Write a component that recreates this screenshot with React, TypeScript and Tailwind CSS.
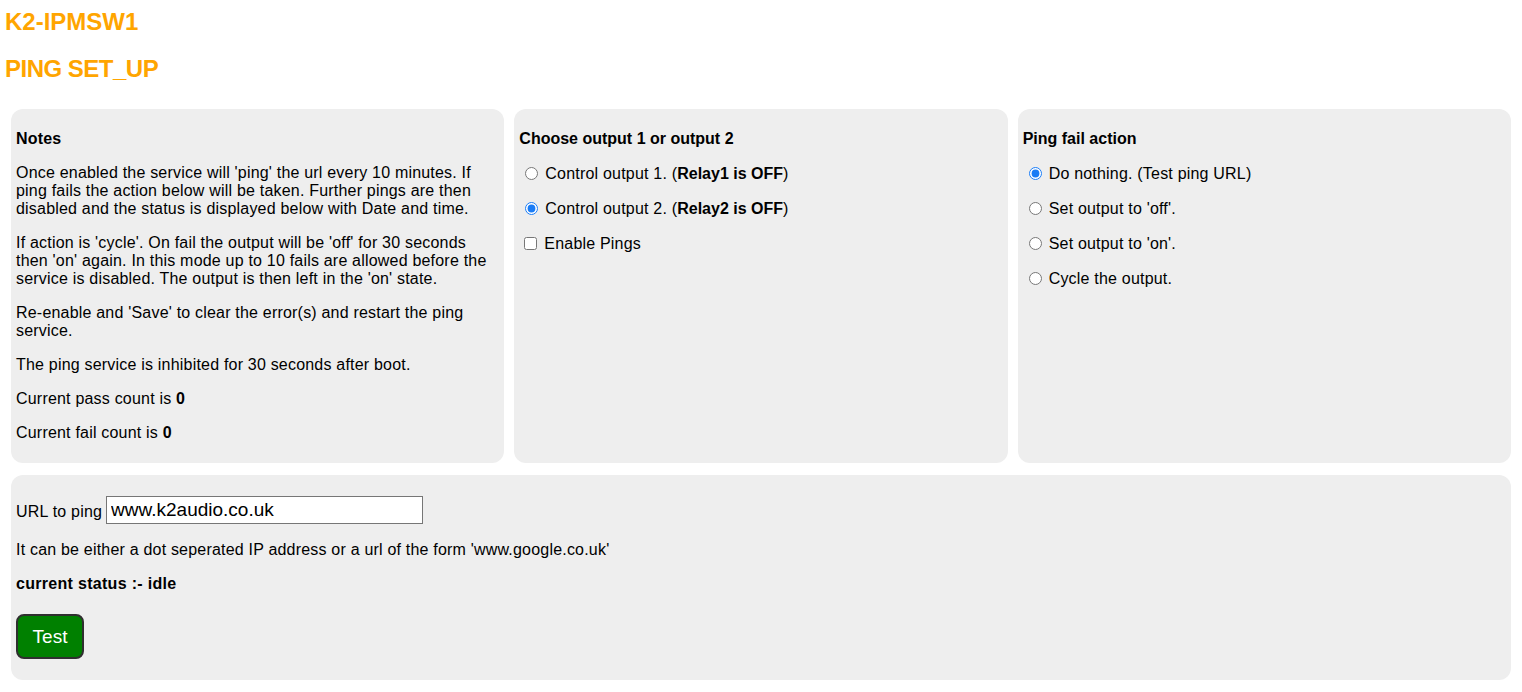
export default function App() {
  return (
    <div className="min-h-screen bg-white text-black text-base leading-[18px] tracking-[0.2px] font-['Liberation_Sans',Arial,sans-serif] pb-3">
      <h2 className="pt-2 ml-[5px] text-[24px] leading-[28px] font-bold tracking-normal text-[#ffa500]">K2-IPMSW1</h2>
      <h2 className="mt-[19px] ml-[5px] text-[24px] leading-[28px] font-bold tracking-[-0.5px] text-[#ffa500]">PING SET_UP</h2>

      <div className="mt-[26px] mx-[11px] grid grid-cols-3 gap-[10px]">
        <div className="bg-[#eeeeee] rounded-xl p-[5px]">
          <p className="my-4 font-bold">Notes</p>
          <p className="my-4">
            Once enabled the service will 'ping' the url every 10 minutes. If ping fails the action below will be taken. Further pings are then disabled and the status is displayed below with Date and time.
          </p>
          <p className="my-4">
            If action is 'cycle'. On fail the output will be 'off' for 30 seconds then 'on' again. In this mode up to 10 fails are allowed before the service is disabled. The output is then left in the 'on' state.
          </p>
          <p className="my-4">Re-enable and 'Save' to clear the error(s) and restart the ping service.</p>
          <p className="my-4">The ping service is inhibited for 30 seconds after boot.</p>
          <p className="my-4">
            Current pass count is <b>0</b>
          </p>
          <p className="my-4">
            Current fail count is <b>0</b>
          </p>
        </div>

        <div className="bg-[#eeeeee] rounded-xl p-[5px]">
          <p className="my-4 font-bold tracking-normal">Choose output 1 or output 2</p>
          <p className="my-4 flex items-center leading-[19px]">
            <input type="radio" name="out" className="ml-[6px] mr-[7px] w-[13px] h-[13px] accent-[#1a7cf5]" />
            <span>
              Control output 1. (<b className="tracking-normal">Relay1 is OFF</b>)
            </span>
          </p>
          <p className="my-4 flex items-center leading-[19px]">
            <input type="radio" name="out" defaultChecked className="ml-[6px] mr-[7px] w-[13px] h-[13px] accent-[#1a7cf5]" />
            <span>
              Control output 2. (<b className="tracking-normal">Relay2 is OFF</b>)
            </span>
          </p>
          <p className="my-4 flex items-center leading-[19px]">
            <input type="checkbox" className="ml-[5px] mr-[7px] w-[13px] h-[13px] accent-[#1a7cf5]" />
            <span>Enable Pings</span>
          </p>
        </div>

        <div className="bg-[#eeeeee] rounded-xl p-[5px]">
          <p className="my-4 font-bold tracking-normal">Ping fail action</p>
          <p className="my-4 flex items-center leading-[19px]">
            <input type="radio" name="act" defaultChecked className="ml-[6px] mr-[7px] w-[13px] h-[13px] accent-[#1a7cf5]" />
            <span>Do nothing. (Test ping URL)</span>
          </p>
          <p className="my-4 flex items-center leading-[19px]">
            <input type="radio" name="act" className="ml-[6px] mr-[7px] w-[13px] h-[13px] accent-[#1a7cf5]" />
            <span>Set output to 'off'.</span>
          </p>
          <p className="my-4 flex items-center leading-[19px]">
            <input type="radio" name="act" className="ml-[6px] mr-[7px] w-[13px] h-[13px] accent-[#1a7cf5]" />
            <span>Set output to 'on'.</span>
          </p>
          <p className="my-4 flex items-center leading-[19px]">
            <input type="radio" name="act" className="ml-[6px] mr-[7px] w-[13px] h-[13px] accent-[#1a7cf5]" />
            <span>Cycle the output.</span>
          </p>
        </div>
      </div>

      <div className="mt-3 mx-[11px] bg-[#eeeeee] rounded-xl p-[5px]">
        <div className="mt-4 flex items-center gap-[4px] h-[28px]">
          <span className="mt-[4px]">URL to ping</span>
          <input
            type="text"
            defaultValue="www.k2audio.co.uk"
            className="w-[317px] h-[28px] px-[4px] bg-white border border-[#767676] text-[19px] tracking-normal font-['Liberation_Sans',Arial,sans-serif]"
          />
        </div>
        <p className="mt-[17px]">It can be either a dot seperated IP address or a url of the form 'www.google.co.uk'</p>
        <p className="mt-4 font-bold tracking-[0.3px]">current status :- idle</p>
        <button className="mt-[21px] mb-4 block w-[68px] h-[45px] bg-[#008000] text-white text-[19px] tracking-normal rounded-lg border-2 border-[#2f2f2f]">
          Test
        </button>
      </div>
    </div>
  );
}
